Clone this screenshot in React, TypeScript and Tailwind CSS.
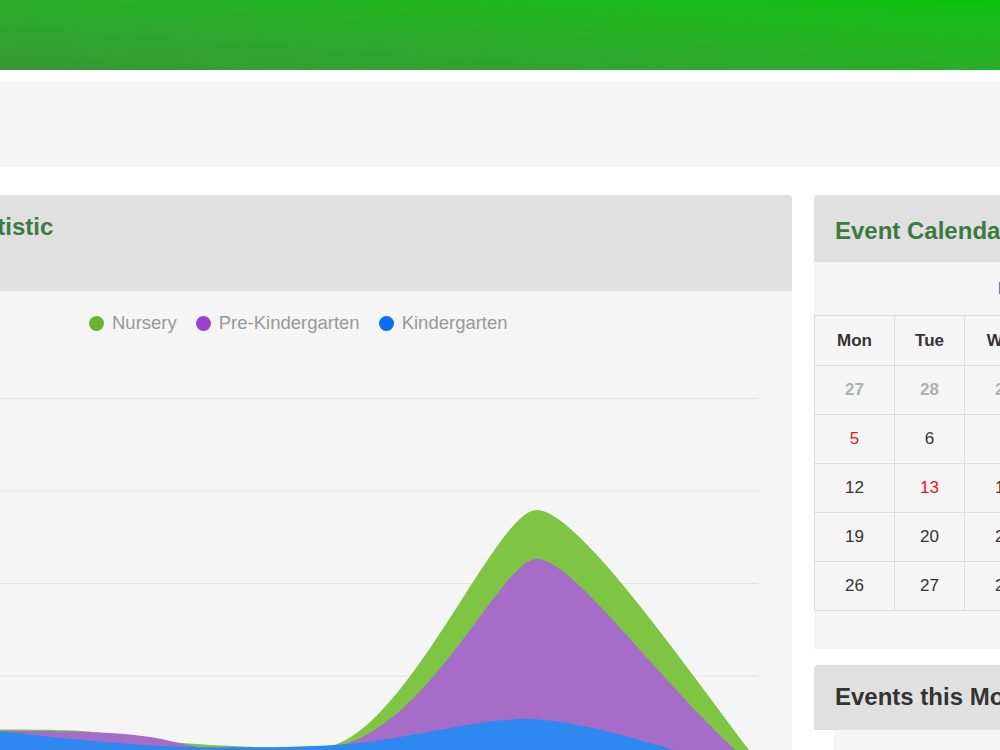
import React from "react";

const FONT = "font-['Liberation_Sans',Arial,sans-serif]";

const LEGEND = [
  { label: "Nursery", dot: "bg-[#69b530]" },
  { label: "Pre-Kindergarten", dot: "bg-[#9b40cc]" },
  { label: "Kindergarten", dot: "bg-[#0a6df2]" },
];

// chart drawn in page coordinates (viewBox matches the visible card)
const GRID_Y = [398.5, 491, 583.5, 676, 768.5];

const AREAS = [
  {
    fill: "#7ec544",
    d: "M -156 729.5 L 0 729.5 C 50 729.5, 80 730, 100 733 C 150 742, 230 748, 316 748 C 400 752, 495 508, 537 510 C 580 510, 700 688, 766 772 L -156 772 Z",
  },
  {
    fill: "#a66dc8",
    d: "M -156 731 L 0 731 C 60 731, 110 731, 150 737 C 175 741, 190 747, 210 748 L 316 748 C 420 752, 500 557, 537 559 C 575 559, 665 692, 758 770 L -156 770 Z",
  },
  {
    fill: "#2f88ef",
    d: "M -156 727 C -80 728, -30 729, 0 731 C 50 737, 120 745, 190 747 C 260 748, 320 747, 360 743 C 420 736, 480 719, 525 719 C 565 719, 620 733, 700 758 L 760 770 L -156 770 Z",
  },
];

type Day = { d: number; muted?: boolean; red?: boolean };

const DAYS = ["Mon", "Tue", "Wed", "Thu", "Fri", "Sat", "Sun"];
const COLS = ["w-[80px]", "w-[70px]", "w-[80px]", "w-[60px]", "w-[60px]", "w-[60px]", "w-[60px]"];

const WEEKS: Day[][] = [
  [{ d: 27, muted: true }, { d: 28, muted: true }, { d: 29, muted: true }, { d: 1 }, { d: 2 }, { d: 3 }, { d: 4 }],
  [{ d: 5, red: true }, { d: 6 }, { d: 7 }, { d: 8 }, { d: 9 }, { d: 10 }, { d: 11 }],
  [{ d: 12 }, { d: 13, red: true }, { d: 14 }, { d: 15 }, { d: 16 }, { d: 17 }, { d: 18 }],
  [{ d: 19 }, { d: 20 }, { d: 21 }, { d: 22 }, { d: 23 }, { d: 24 }, { d: 25 }],
  [{ d: 26 }, { d: 27 }, { d: 28 }, { d: 29 }, { d: 30 }, { d: 31 }, { d: 1, muted: true }],
];

function StatisticCard() {
  return (
    <div className="w-[948px] shrink-0">
      <div className="h-[96px] rounded-tr-[4px] bg-[#e0e0e0] pl-5 pt-[18px]">
        <h3 className="text-[24px] font-bold leading-[28px] text-[#3b7b3f]">Student Statistic</h3>
      </div>
      <div className="h-[460px] bg-[#f5f5f5] pt-[21px]">
        <div className="flex h-[22px] items-center pl-[245px]">
          {LEGEND.map((l) => (
            <div key={l.label} className="mr-[19px] flex items-center">
              <span className={`mr-[8px] h-[15px] w-[15px] rounded-full ${l.dot}`} />
              <span className="text-[18.5px] leading-[22px] text-[#999999]">{l.label}</span>
            </div>
          ))}
        </div>
        <svg
          className="block"
          width={948}
          height={436}
          viewBox="-156 334 948 436"
          aria-hidden
        >
          {GRID_Y.map((y) => (
            <line key={y} x1={-90} x2={758} y1={y} y2={y} stroke="#e3e3e3" strokeWidth={1} />
          ))}
          {AREAS.map((a) => (
            <path key={a.fill} d={a.d} fill={a.fill} />
          ))}
        </svg>
      </div>
    </div>
  );
}

function CalendarCard() {
  return (
    <div className="w-[470px] shrink-0">
      <div className="h-[67px] rounded-tl-[4px] bg-[#e0e0e0] pl-[21px] pt-[22px]">
        <h3 className="text-[24px] font-bold leading-[28px] text-[#3b7b3f]">Event Calendar</h3>
      </div>
      <div className="bg-[#f5f5f5] pb-[38px]">
        <div className="flex h-[53px] items-center pl-[184px]">
          <span className="text-[17px] font-bold text-[#2d6aa0]">March 2024</span>
        </div>
        <table className="w-full table-fixed border-collapse text-[17px] text-[#333333]">
          <thead>
            <tr className="h-[50px]">
              {DAYS.map((d, i) => (
                <th key={d} className={`${COLS[i]} border border-[#dddddd] text-center font-bold`}>
                  {d}
                </th>
              ))}
            </tr>
          </thead>
          <tbody>
            {WEEKS.map((w, r) => (
              <tr key={r} className="h-[49px]">
                {w.map((day, i) => (
                  <td
                    key={i}
                    className={`border border-[#dddddd] text-center ${
                      day.muted
                        ? "font-bold text-[#b0b0b0]"
                        : day.red
                          ? "text-[#e8141c]"
                          : "text-[#333333]"
                    }`}
                  >
                    {day.d}
                  </td>
                ))}
              </tr>
            ))}
          </tbody>
        </table>
      </div>

      <div className="mt-[16px] h-[65px] rounded-tl-[4px] bg-[#e0e0e0] pl-[21px] pt-[18px]">
        <h3 className="text-[24px] font-bold leading-[28px] text-[#333333]">Events this Month</h3>
      </div>
      <div className="pl-5">
        <div className="h-[40px] bg-[#f5f5f5]" />
      </div>
    </div>
  );
}

export default function App() {
  return (
    <div className={`h-[750px] w-[1000px] overflow-hidden bg-white ${FONT}`}>
      <div className="h-[70px] bg-linear-to-tr from-[#369834] to-[#08c20c]" />
      <div className="mt-[12px] h-[85px] bg-[#f5f5f5]" />
      <div className="-ml-[156px] mt-[28px] flex gap-[22px]">
        <StatisticCard />
        <CalendarCard />
      </div>
    </div>
  );
}
